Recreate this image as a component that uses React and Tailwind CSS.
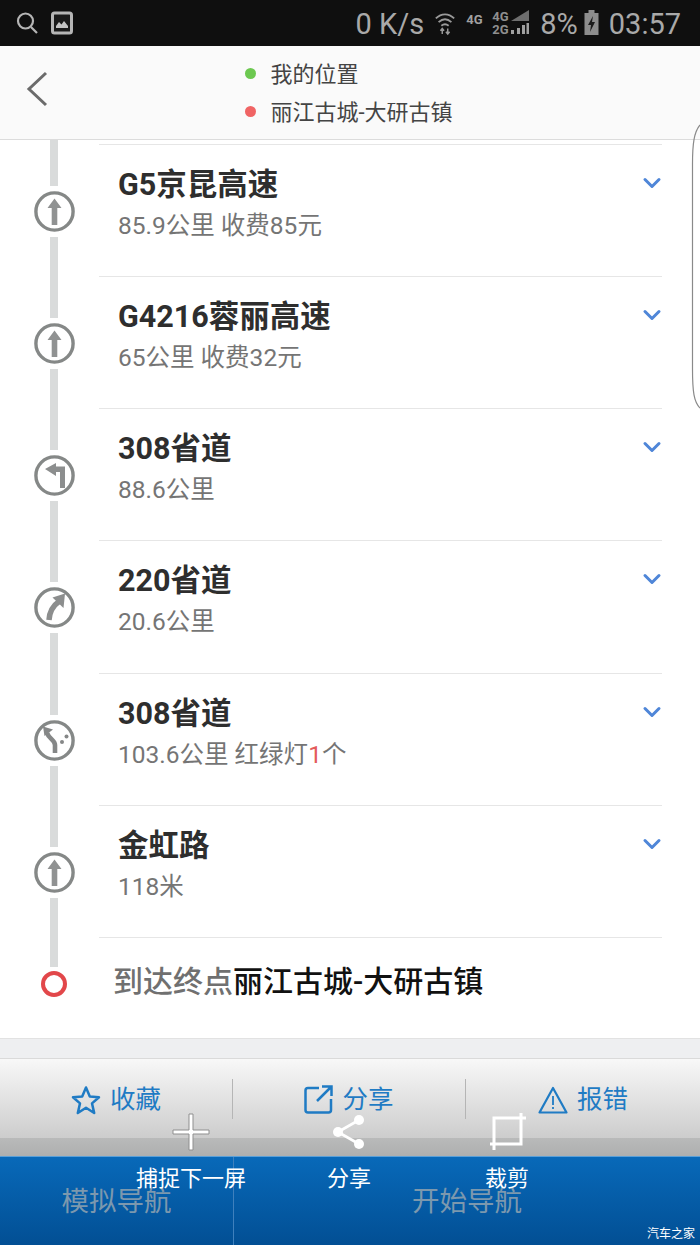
import { ChevronDown } from 'lucide-react'

const FONT = 'font-[Roboto,"Noto_Sans_CJK_SC",sans-serif]'

const ROUTE = [
  { name: 'G5京昆高速', info: '85.9公里 收费85元', icon: 'up' },
  { name: 'G4216蓉丽高速', info: '65公里 收费32元', icon: 'up' },
  { name: '308省道', info: '88.6公里', icon: 'left' },
  { name: '220省道', info: '20.6公里', icon: 'curve' },
  { name: '308省道', info: '103.6公里 红绿灯', lights: '1', icon: 'round' },
  { name: '金虹路', info: '118米', icon: 'up' },
]

function TurnIcon({ type }) {
  return (
    <svg width="41" height="41" viewBox="0 0 41 41" className="shrink-0">
      <circle cx="20.5" cy="20.5" r="18.6" fill="#fff" stroke="#858887" strokeWidth="3.4" />
      {type === 'up' && <path d="M20.5 7.5 27.5 17H23.3V34H17.7V17H13.5Z" fill="#909292" />}
      {type === 'left' && <path d="M11 14 22 8V11.5H31V33H26V17H22V21Z" fill="#8c8e8e" />}
      {type === 'curve' && (
        <>
          <path d="M15 33C15.5 25 18.5 19 25 14.5" fill="none" stroke="#8c8e8e" strokeWidth="5.5" />
          <path d="M31 6.5 29.5 21 18.5 10.5Z" fill="#8c8e8e" />
        </>
      )}
      {type === 'round' && (
        <>
          <path d="M21 33V25C21 20 15 19 13 13" fill="none" stroke="#858787" strokeWidth="4.6" />
          <path d="M9 6.5 19 9.5 10.5 16Z" fill="#858787" />
          <circle cx="28" cy="22" r="2" fill="#858787" />
          <circle cx="32.5" cy="16.5" r="2" fill="#858787" />
        </>
      )}
    </svg>
  )
}

function RouteRow({ name, info, lights, icon }) {
  return (
    <div className="flex h-[132.2px] shrink-0">
      <div className="flex w-[99px] shrink-0 flex-col items-center pl-[9px]">
        <div className="h-[42px] w-[8px] bg-[#d9dbdb]" />
        <div className="mt-[5px] mb-[5px] flex">
          <TurnIcon type={icon} />
        </div>
        <div className="w-[8px] flex-1 bg-[#d9dbdb]" />
      </div>
      <div className="relative w-[563px] border-t border-[#e6e6e6] pl-[19px] pt-[21px]">
        <div className="text-[30.5px] leading-[38px] font-bold text-[#2e2e2e]">{name}</div>
        <div className="mt-[7px] text-[24.5px] leading-[30px] text-[#757575]">
          {info}
          {lights && <span className="text-[#e35b5b]">{lights}</span>}
          {lights && '个'}
        </div>
        <ChevronDown
          size={28}
          strokeWidth={2.6}
          className="absolute right-[-4px] top-[24px] text-[#4f86d8]"
        />
      </div>
    </div>
  )
}

function ActionButton({ children, label, width }) {
  return (
    <div className={`flex h-[82px] items-center justify-center gap-[9px] ${width}`}>
      {children}
      <span className="text-[25.5px] leading-none text-[#1f7bc4]">{label}</span>
    </div>
  )
}

export default function App() {
  return (
    <div className={`relative flex h-[1245px] w-[700px] flex-col overflow-hidden bg-white ${FONT}`}>
      {/* status bar */}
      <div className="flex h-[46px] shrink-0 items-center bg-[#0f0f0f] pl-[16px] pr-[19px] text-[#a9a9a9]">
        <svg width="22" height="24" viewBox="0 0 22 24" fill="none" stroke="#b5b5b5" strokeWidth="2.2">
          <circle cx="9.5" cy="10" r="7.5" />
          <path d="M15 16 21 22" />
        </svg>
        <svg width="22" height="24" viewBox="0 0 22 24" className="ml-[13px]">
          <rect x="1.5" y="2" width="19" height="20" rx="2" fill="#1a1a1a" stroke="#b5b5b5" strokeWidth="3" />
          <path d="M5 17V15L8 11 10.5 13.5 13 10 17 15V17Z" fill="#c4c4c4" />
        </svg>
        <div className="flex-1" />
        <span className="pt-[3px] text-[29px] leading-none">0 K/s</span>
        <svg width="22" height="26" viewBox="0 0 24 26" fill="none" stroke="#9a9a9a" strokeWidth="2" className="ml-[10px]">
          <path d="M2 8C8 2 16 2 22 8M5 12C9.5 8 14.5 8 19 12M8 16C10.5 14 13.5 14 16 16" />
          <path d="M9 25V20M7 21.5 9 19 11 21.5M15 19V24M13 22.5 15 25 17 22.5" strokeWidth="1.6" />
        </svg>
        <span className="ml-[10px] mb-[8px] w-[18px] text-[13px] leading-none font-bold text-[#a0a0a0]">4G</span>
        <div className="ml-[8px] flex w-[18px] flex-col text-[13px] leading-[13px] font-bold text-[#8f8f8f]">
          <span>4G</span>
          <span>2G</span>
        </div>
        <svg width="20" height="26" viewBox="0 0 20 26">
          <path d="M1 11 19 0V11Z" fill="#6e6e6e" />
          <path d="M1 20V24H4V20ZM7 18V24H10V18ZM12 15V24H15V15ZM16.5 13V24H19V13Z" fill="#a0a0a0" />
        </svg>
        <span className="ml-[10px] pt-[3px] text-[29px] leading-none">8%</span>
        <svg width="15" height="26" viewBox="0 0 15 26" className="ml-[6px]">
          <rect x="4.5" y="0" width="6" height="3" fill="#8d8d8d" />
          <rect x="0.5" y="3" width="14" height="22" fill="#8d8d8d" />
          <path d="M9 6 4 15H7L6 22 11 12H8Z" fill="#1c1c1c" />
        </svg>
        <span className="ml-[10px] pt-[3px] text-[29px] leading-none">03:57</span>
      </div>

      {/* header */}
      <div className="flex h-[94px] shrink-0 border-b border-[#dcdcdc] bg-[#fafafa]">
        <div className="flex w-[245px] items-start pl-[26px] pt-[25px]">
          <svg width="22" height="36" viewBox="0 0 22 36" fill="none" stroke="#6b6b6b" strokeWidth="3">
            <path d="M20 2 3 18 20 34" />
          </svg>
        </div>
        <div className="flex flex-col gap-[10px] pt-[15px] text-[22px] leading-[28px] text-[#444]">
          <div className="flex items-center gap-[14.5px]">
            <span className="mb-[3px] h-[11px] w-[11px] rounded-full bg-[#6cc850]" />
            <span>我的位置</span>
          </div>
          <div className="flex items-center gap-[14.5px]">
            <span className="mb-[3px] h-[11px] w-[11px] rounded-full bg-[#f06464]" />
            <span>丽江古城-大研古镇</span>
          </div>
        </div>
      </div>

      {/* route list */}
      <div className="flex h-[3.75px] shrink-0">
        <div className="flex w-[99px] justify-center pl-[9px]">
          <div className="w-[8px] bg-[#d9dbdb]" />
        </div>
      </div>
      {ROUTE.map((row, i) => (
        <RouteRow key={i} {...row} />
      ))}

      {/* destination */}
      <div className="flex h-[100.9px] shrink-0">
        <div className="flex w-[99px] shrink-0 flex-col items-center pl-[9px]">
          <div className="h-[30px] w-[8px] bg-[#d9dbdb]" />
          <div className="mt-[4px] h-[26px] w-[26px] rounded-full border-[4px] border-[#e2474a]" />
        </div>
        <div className="w-[563px] border-t border-[#e6e6e6] pt-[25px] pl-[14px] text-[30px] leading-[38px] font-medium">
          <span className="text-[#707070]">到达终点</span>
          <span className="text-[#111]">丽江古城-大研古镇</span>
        </div>
      </div>

      <div className="h-[20px] shrink-0 border-t border-[#e2e2e2] bg-[#eeeff1]" />

      {/* actions */}
      <div className="flex h-[98px] shrink-0 items-start border-t border-[#dadada] bg-[linear-gradient(to_bottom,#f8f8f8_0%,#cdcdcd_81%,#b9baba_81%,#aeafaf_100%)]">
        <ActionButton label="收藏" width="w-[232px]">
          <svg width="30" height="30" viewBox="0 0 30 30" fill="none" stroke="#1f7bc4" strokeWidth="2.5" strokeLinejoin="round">
            <path d="M15 2.5 18.8 11.5 28 12.2 21 18.4 23.2 28 15 22.8 6.8 28 9 18.4 2 12.2 11.2 11.5Z" />
          </svg>
        </ActionButton>
        <div className="mt-[20px] h-[40px] w-px bg-[#b5b5b5]" />
        <ActionButton label="分享" width="w-[232px]">
          <svg width="29" height="29" viewBox="0 0 29 29" fill="none" stroke="#1f7bc4" strokeWidth="2.5">
            <path d="M15 3H4Q1.5 3 1.5 5.5V25Q1.5 27.5 4 27.5H24.5Q27 27.5 27 25V14" />
            <path d="M13 16 27 2M18 1.5H27.5V11" />
          </svg>
        </ActionButton>
        <div className="mt-[20px] h-[40px] w-px bg-[#b5b5b5]" />
        <ActionButton label="报错" width="flex-1">
          <svg width="30" height="28" viewBox="0 0 30 28" fill="none" stroke="#1f7bc4" strokeWidth="2.2" strokeLinejoin="round">
            <path d="M15 2 28.5 26.5H1.5Z" />
            <path d="M15 10V19M15 21V23" strokeWidth="1.8" />
          </svg>
        </ActionButton>
      </div>

      {/* navigation */}
      <div className="flex flex-1 items-center border-t border-[#5ba0d8] bg-[linear-gradient(to_bottom,#0869b9,#024f94)] text-[27.5px] leading-none text-[#7c98ae]">
        <div className="w-[233px] pt-[2px] text-center">模拟导航</div>
        <div className="h-full w-px bg-[#3f80bd]" />
        <div className="w-[466px] pt-[2px] text-center">开始导航</div>
      </div>

      {/* screenshot menu overlay */}
      <div className="absolute left-[112px] top-[1113px] flex text-[22px] leading-[28px] text-white">
        <div className="flex w-[158px] flex-col items-center">
          <svg width="38" height="38" viewBox="0 0 38 38">
            <path d="M17 1H21V17H37V21H21V37H17V21H1V17H17Z" fill="#fff" stroke="#8f8f8f" strokeWidth="1" />
          </svg>
          <span className="mt-[14px]">捕捉下一屏</span>
        </div>
        <div className="flex w-[158px] flex-col items-center">
          <svg width="38" height="38" viewBox="0 0 38 38" fill="#fff" stroke="#fff">
            <path d="M8 19 29 7M8 19 29 31" strokeWidth="2.6" fill="none" />
            <circle cx="8" cy="19" r="5" stroke="none" />
            <circle cx="29" cy="7" r="5" stroke="none" />
            <circle cx="29" cy="31" r="5" stroke="none" />
          </svg>
          <span className="mt-[14px]">分享</span>
        </div>
        <div className="flex w-[158px] flex-col items-center">
          <svg width="38" height="38" viewBox="0 0 38 38" fill="none" stroke="#fff" strokeWidth="3">
            <path d="M2 31H33V0" />
            <path d="M38 5H6V37" />
          </svg>
          <span className="mt-[14px]">裁剪</span>
        </div>
      </div>

      {/* edge handle */}
      <svg width="9" height="285" viewBox="0 0 9 285" fill="none" stroke="#8a8a8a" strokeWidth="1.2" className="absolute right-0 top-[124px]">
        <path d="M9 1C3 8 1.5 20 1.5 40V245C1.5 268 3 278 9 284" />
      </svg>

      <span className="absolute left-[647px] top-[1227px] text-[12px] leading-[14px] text-white">汽车之家</span>
    </div>
  )
}
